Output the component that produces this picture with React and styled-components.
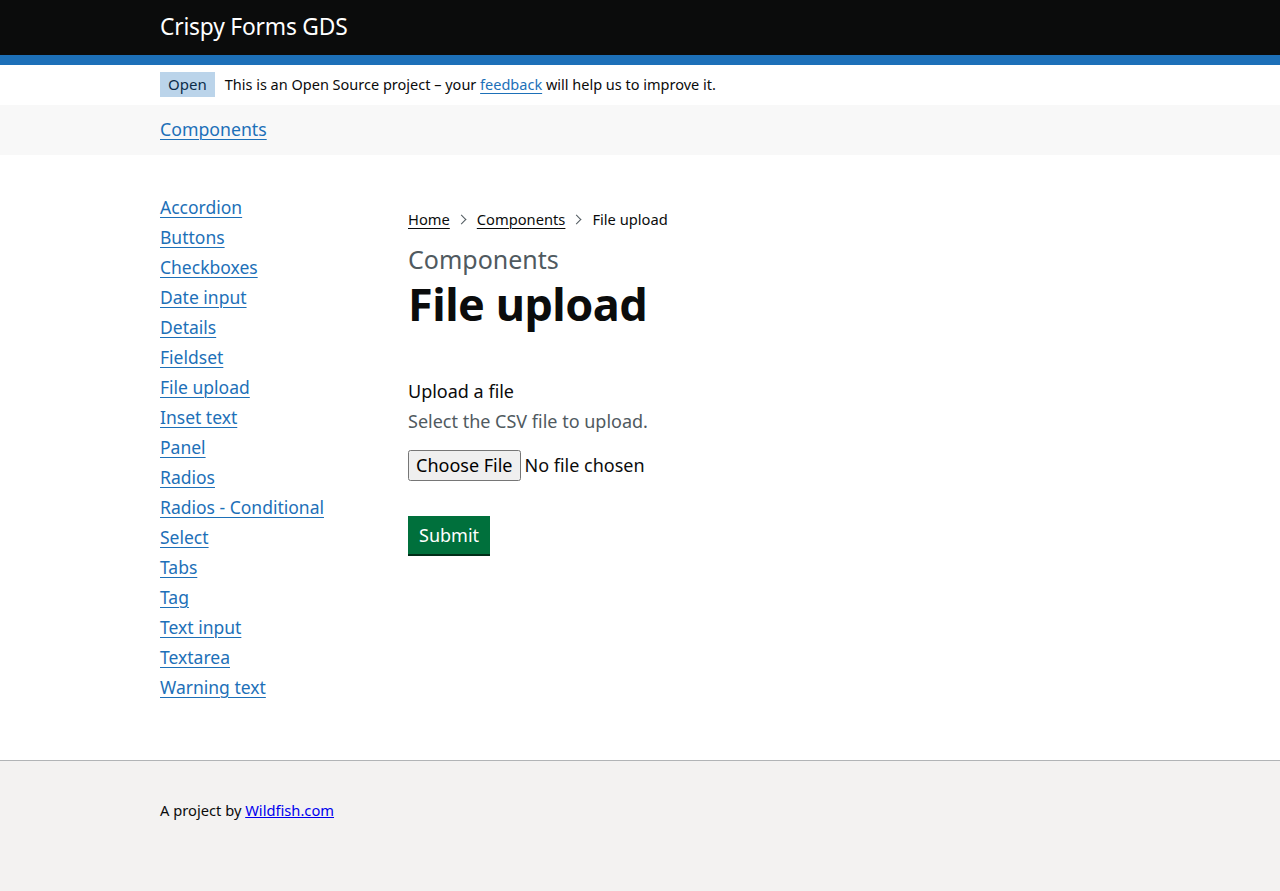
import styled, { createGlobalStyle } from "styled-components";

const GlobalStyle = createGlobalStyle`
  html, body {
    margin: 0;
    padding: 0;
    background: #ffffff;
    font-family: "Noto Sans", "Liberation Sans", sans-serif;
    color: #0b0c0c;
  }
  * { box-sizing: border-box; }
`;

const Page = styled.div`
  min-height: 891px;
  display: flex;
  flex-direction: column;
`;

const Width = styled.div`
  width: 960px;
  margin: 0 auto;
`;

const Header = styled.header`
  background: #0b0c0c;
  border-bottom: 10px solid #1d70b8;
`;

const HeaderInner = styled(Width)`
  height: 55px;
  display: flex;
  align-items: center;
  padding-bottom: 2px;
`;

const ServiceName = styled.a`
  color: #ffffff;
  font-size: 22.8px;
  text-decoration: none;
  letter-spacing: -0.2px;
`;

const PhaseBanner = styled(Width)`
  height: 40px;
  display: flex;
  align-items: center;
  gap: 10px;
  font-size: 14.5px;
  padding-bottom: 2px;
`;

const Tag = styled.strong`
  background: #bbd4ea;
  color: #0c2d4a;
  font-weight: 400;
  font-size: 15px;
  padding: 2px 8px 3px;
  line-height: 20px;
`;

const BlueLink = styled.a`
  color: #1d70b8;
  text-decoration: underline;
  text-decoration-thickness: 1px;
  text-underline-offset: 3px;
`;

const SubNav = styled.nav`
  background: #f8f8f8;
  height: 50px;
`;

const SubNavInner = styled(Width)`
  height: 100%;
  display: flex;
  align-items: center;
  font-size: 17.7px;
  padding-bottom: 2px;
`;

const Main = styled(Width)`
  flex: 1;
  display: grid;
  grid-template-columns: 248px 1fr;
  padding: 37px 0 58px;
`;

const SideList = styled.ul`
  list-style: none;
  margin: 0;
  padding: 0;
  display: flex;
  flex-direction: column;
`;

const SideItem = styled.li`
  font-size: 17.5px;
  line-height: 30px;
  height: 30px;
`;

const Content = styled.div`
  display: flex;
  flex-direction: column;
`;

const Breadcrumbs = styled.ol`
  list-style: none;
  margin: 17px 0 0;
  padding: 0;
  display: flex;
  align-items: center;
  font-size: 14.7px;
  line-height: 20px;
`;

const Crumb = styled.li`
  display: flex;
  align-items: center;
`;

const Chevron = styled.span`
  display: inline-block;
  width: 7px;
  height: 7px;
  border-top: 1px solid #505a5f;
  border-right: 1px solid #505a5f;
  transform: rotate(45deg);
  margin: 0 12px 0 8px;
`;

const CrumbLink = styled.a`
  color: #0b0c0c;
  text-decoration: underline;
  text-decoration-thickness: 1px;
  text-underline-offset: 3px;
`;

const Caption = styled.span`
  margin-top: 15px;
  color: #505a5f;
  font-size: 25px;
  line-height: 30px;
`;

const Title = styled.h1`
  margin: 5px 0 50px;
  font-size: 45px;
  font-weight: 700;
  line-height: 50px;
  letter-spacing: -0.5px;
`;

const Label = styled.label`
  font-size: 18px;
  line-height: 25px;
`;

const Hint = styled.div`
  margin-top: 5px;
  color: #505a5f;
  font-size: 18px;
  line-height: 25px;
`;

const FileInput = styled.input`
  margin: 16px 0 0;
  font-family: "Noto Sans", sans-serif;
  font-size: 18px;
  align-self: flex-start;

  &::file-selector-button {
    font-family: "Noto Sans", sans-serif;
    font-size: 18px;
    padding: 1px 6px 2px;
  }
`;

const SubmitButton = styled.button`
  margin-top: 35px;
  align-self: flex-start;
  background: #00703c;
  color: #ffffff;
  border: 0;
  border-radius: 0;
  box-shadow: 0 2px 0 #002d18;
  font-family: "Noto Sans", sans-serif;
  font-size: 18px;
  line-height: 20px;
  padding: 9px 11px 9px;
  cursor: pointer;
`;

const Footer = styled.footer`
  background: #f3f2f1;
  border-top: 1px solid #b1b4b6;
  height: 131px;
`;

const FooterInner = styled(Width)`
  padding-top: 39px;
  font-size: 14.7px;
  line-height: 20px;
`;

const FooterLink = styled.a`
  color: #0000ee;
  text-decoration: underline;
`;

const links = [
  "Accordion",
  "Buttons",
  "Checkboxes",
  "Date input",
  "Details",
  "Fieldset",
  "File upload",
  "Inset text",
  "Panel",
  "Radios",
  "Radios - Conditional",
  "Select",
  "Tabs",
  "Tag",
  "Text input",
  "Textarea",
  "Warning text",
];

export default function App() {
  return (
    <Page>
      <GlobalStyle />
      <Header>
        <HeaderInner>
          <ServiceName href="#">Crispy Forms GDS</ServiceName>
        </HeaderInner>
      </Header>
      <PhaseBanner>
        <Tag>Open</Tag>
        <span>
          This is an Open Source project – your <BlueLink href="#">feedback</BlueLink> will
          help us to improve it.
        </span>
      </PhaseBanner>
      <SubNav>
        <SubNavInner>
          <BlueLink href="#">Components</BlueLink>
        </SubNavInner>
      </SubNav>
      <Main>
        <SideList>
          {links.map((l) => (
            <SideItem key={l}>
              <BlueLink href="#">{l}</BlueLink>
            </SideItem>
          ))}
        </SideList>
        <Content>
          <Breadcrumbs>
            <Crumb>
              <CrumbLink href="#">Home</CrumbLink>
              <Chevron />
            </Crumb>
            <Crumb>
              <CrumbLink href="#">Components</CrumbLink>
              <Chevron />
            </Crumb>
            <Crumb>File upload</Crumb>
          </Breadcrumbs>
          <Caption>Components</Caption>
          <Title>File upload</Title>
          <Label htmlFor="upload">Upload a file</Label>
          <Hint>Select the CSV file to upload.</Hint>
          <FileInput id="upload" type="file" />
          <SubmitButton type="button">Submit</SubmitButton>
        </Content>
      </Main>
      <Footer>
        <FooterInner>
          A project by <FooterLink href="#">Wildfish.com</FooterLink>
        </FooterInner>
      </Footer>
    </Page>
  );
}
